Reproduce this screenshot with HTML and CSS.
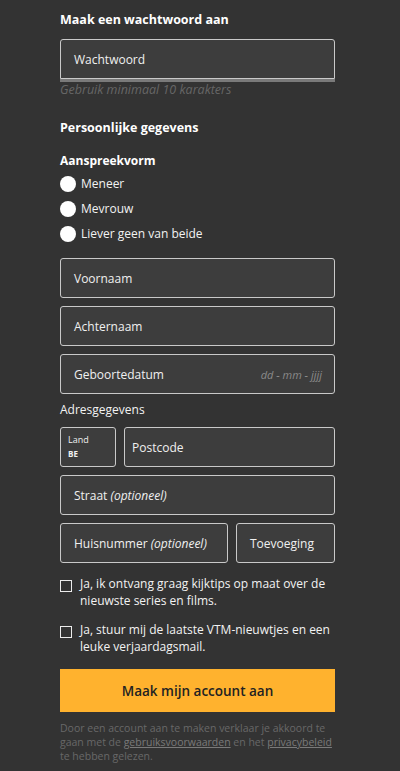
FILE: index.html
```html
<!DOCTYPE html>
<html lang="nl">
<head>
<meta charset="utf-8">
<title>Account aanmaken</title>
<link rel="stylesheet" href="styles.css">
</head>
<body>
<main class="form">
  <h2 class="title">Maak een wachtwoord aan</h2>
  <div class="pw">
    <div class="field"><span class="ph">Wachtwoord</span></div>
    <div class="strength"></div>
  </div>
  <p class="hint">Gebruik minimaal 10 karakters</p>

  <h2 class="title title-2">Persoonlijke gegevens</h2>
  <h3 class="sub">Aanspreekvorm</h3>
  <div class="radios">
    <label class="radio"><span class="dot"></span>Meneer</label>
    <label class="radio"><span class="dot"></span>Mevrouw</label>
    <label class="radio"><span class="dot"></span>Liever geen van beide</label>
  </div>

  <div class="fields">
    <div class="field"><span class="ph">Voornaam</span></div>
    <div class="field"><span class="ph">Achternaam</span></div>
    <div class="field field-date"><span class="ph">Geboortedatum</span><span class="fmt">dd - mm - jjjj</span></div>
  </div>

  <p class="addr">Adresgegevens</p>
  <div class="fields">
    <div class="row">
      <div class="field field-land"><span class="land-l">Land</span><span class="land-v">BE</span></div>
      <div class="field field-pc"><span class="ph">Postcode</span></div>
    </div>
    <div class="field"><span class="ph">Straat <i>(optioneel)</i></span></div>
    <div class="row">
      <div class="field field-nr"><span class="ph">Huisnummer <i>(optioneel)</i></span></div>
      <div class="field grow"><span class="ph">Toevoeging</span></div>
    </div>
  </div>

  <label class="check"><span class="box"></span><span class="check-text">Ja, ik ontvang graag kijktips op maat over de nieuwste series en films.</span></label>
  <label class="check"><span class="box"></span><span class="check-text">Ja, stuur mij de laatste VTM-nieuwtjes en een leuke verjaardagsmail.</span></label>

  <button class="submit" type="button">Maak mijn account aan</button>

  <p class="legal">Door een account aan te maken verklaar je akkoord te gaan met de <a href="#">gebruiksvoorwaarden</a> en het <a href="#">privacybeleid</a> te hebben gelezen.</p>
</main>
</body>
</html>
```

FILE: styles.css
```css
* { box-sizing: border-box; }

html, body {
  margin: 0;
  background: #333333;
}

body {
  font-family: "Open Sans", "DejaVu Sans", sans-serif;
  color: #f2f2f2;
}

.form {
  width: 275px;
  margin-left: 60px;
  padding-top: 11px;
  display: flex;
  flex-direction: column;
}

.title {
  margin: 0;
  font-size: 12.5px;
  line-height: 18px;
  font-weight: 700;
  color: #ffffff;
}

.pw {
  margin-top: 10px;
  display: flex;
  flex-direction: column;
}

.field {
  height: 40px;
  border: 1px solid #c9c9c9;
  border-radius: 3px;
  background: #3d3d3d;
  display: flex;
  align-items: center;
  padding: 0 12px 0 13px;
  font-size: 12px;
  color: #f0f0f0;
  white-space: nowrap;
}

.pw .field {
  border-radius: 3px 3px 0 0;
}

.strength {
  height: 3px;
  background: #7a7a7a;
}

.hint {
  margin: 1px 0 0;
  font-size: 12.5px;
  line-height: 14px;
  font-style: italic;
  color: #666666;
}

.title-2 {
  margin-top: 22px;
}

.sub {
  margin: 16px 0 0;
  font-size: 12px;
  line-height: 16px;
  font-weight: 700;
  color: #ffffff;
}

.radios {
  margin-top: 2px;
  display: flex;
  flex-direction: column;
}

.radio {
  height: 25px;
  display: flex;
  align-items: center;
  gap: 5px;
  font-size: 12px;
  color: #f2f2f2;
}

.dot {
  width: 16px;
  height: 16px;
  border-radius: 50%;
  background: #ffffff;
  flex: none;
}

.radios + .fields {
  margin-top: 12px;
}

.fields {
  display: flex;
  flex-direction: column;
  gap: 8px;
}

.field-date {
  justify-content: space-between;
}

.fmt {
  font-size: 11px;
  font-style: italic;
  color: #8a8a8a;
}

.addr {
  margin: 8px 0 9px;
  font-size: 12px;
  line-height: 16px;
  color: #f2f2f2;
}

.row {
  display: flex;
  gap: 8px;
}

.grow {
  flex: 1;
}

.field-pc {
  flex: 1;
  padding-left: 7px;
}

.field-land {
  width: 56px;
  flex: none;
  padding: 0 7px;
  flex-direction: column;
  align-items: flex-start;
  justify-content: center;
  gap: 2px;
}

.land-l {
  font-size: 9px;
  line-height: 12px;
}

.land-v {
  font-size: 8px;
  line-height: 12px;
  font-weight: 700;
}

.field-nr {
  width: 168px;
  flex: none;
  padding-right: 4px;
}

.check {
  margin-top: 12px;
  display: flex;
  align-items: flex-start;
  gap: 8px;
  font-size: 12px;
  line-height: 17px;
  color: #f2f2f2;
}

.box {
  width: 12px;
  height: 12px;
  border: 1.5px solid #ececec;
  margin-top: 5px;
  flex: none;
}

.submit {
  margin-top: 14px;
  height: 43px;
  border: 0;
  background: #ffb22e;
  font-family: inherit;
  font-size: 13.5px;
  font-weight: 600;
  color: #222222;
  cursor: pointer;
}

.legal {
  margin: 9px 0 0;
  font-size: 10.5px;
  line-height: 14px;
  color: #686868;
}

.legal a {
  display: inline-block;
  line-height: 14px;
  color: #7a7a7a;
  text-decoration: underline;
}
```
